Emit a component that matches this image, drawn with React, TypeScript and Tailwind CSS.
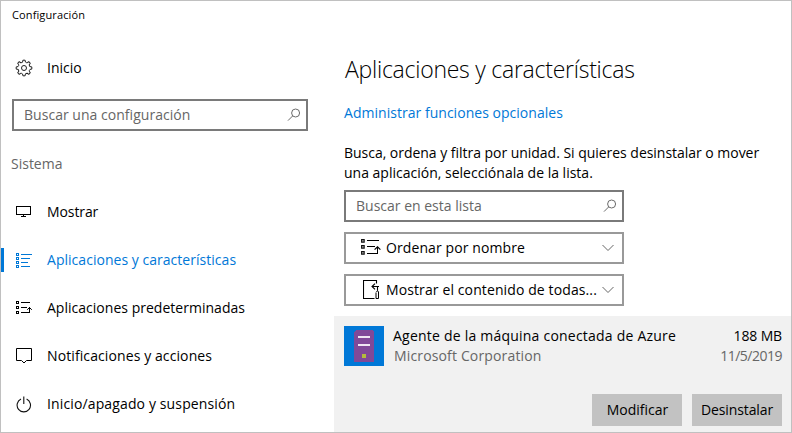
import type { ReactNode } from "react";

function GearIcon() {
  const teeth = [0, 45, 90, 135, 180, 225, 270, 315];
  return (
    <svg width="18" height="18" viewBox="0 0 18 18" fill="none" stroke="#222" strokeWidth="1">
      <circle cx="9" cy="9" r="2.5" />
      {teeth.map((a) => (
        <path
          key={a}
          transform={`rotate(${a} 9 9)`}
          d="M7.6 3 L7.9 1.2 H10.1 L10.4 3 Q11.3 3.9 12.2 3.7"
          strokeLinejoin="round"
        />
      ))}
    </svg>
  );
}

function SearchIcon() {
  return (
    <svg width="14" height="14" viewBox="0 0 14 14" fill="none" stroke="#6b6b6b" strokeWidth="1">
      <circle cx="8.6" cy="5" r="4" />
      <path d="M5.7 7.9 L1 12.6" />
    </svg>
  );
}

function MonitorIcon() {
  return (
    <svg width="16" height="12" viewBox="0 0 16 12" fill="none" stroke="#000" shapeRendering="crispEdges">
      <path d="M0.5 0.5 H14.5 V8.5 H0.5 Z M7.5 9 V10 M5 10.5 H10" />
    </svg>
  );
}

function ListIcon() {
  return (
    <svg width="17" height="15" viewBox="0 0 17 15" fill="none" stroke="#0078d7" shapeRendering="crispEdges">
      <path d="M0.5 0.5h2v2h-2z M0.5 4.5h2v2h-2z M0.5 8.5h2v2h-2z M0.5 12.5h2v2h-2z" />
      <path d="M5 1.5H16 M5 5.5H14 M5 9.5H12 M5 13.5H14" />
    </svg>
  );
}

function DefaultsIcon() {
  return (
    <svg width="17" height="14" viewBox="0 0 17 14" fill="none" stroke="#000">
      <path shapeRendering="crispEdges" d="M0.5 0.5h2v2h-2z M0.5 5.5h2v2h-2z M0.5 10.5h2v2h-2z M5 1.5H14 M5 6.5H11 M5 11.5H14 M13.5 6V11" />
      <path d="M11.2 8.8 L13.5 6.5 L15.8 8.8" />
    </svg>
  );
}

function NotificationIcon() {
  return (
    <svg width="16" height="16" viewBox="0 0 16 16" fill="none" stroke="#000">
      <path d="M0.5 0.5 H15.5 V12.5 H10.5 L8 15 L5.5 12.5 H0.5 Z" />
    </svg>
  );
}

function PowerIcon() {
  return (
    <svg width="16" height="17" viewBox="0 0 16 17" fill="none" stroke="#111" strokeWidth="1.1">
      <path d="M5 3.1 A6.7 6.7 0 1 0 10.6 3.1 M7.8 0.5 V8" />
    </svg>
  );
}

function SortIcon() {
  return (
    <svg width="20" height="18" viewBox="0 0 20 18" fill="none" stroke="#000">
      <path strokeWidth="1.3" stroke="#111" d="M0.7 0.7h2.4v2.4h-2.4z M0.7 6.7h2.4v2.4h-2.4z M0.7 12.7h2.4v2.4h-2.4z" />
      <path shapeRendering="crispEdges" d="M6 1.5H18 M6 7.5H14 M6 14.5H17 M16.5 8V15" />
      <path strokeWidth="1.2" d="M13.6 10.6 L16.5 7.8 L19.4 10.6" />
    </svg>
  );
}

function DriveIcon() {
  return (
    <svg width="18" height="20" viewBox="0 0 18 20" fill="none" stroke="#000">
      <path strokeWidth="1.1" d="M11.5 18.5 H0.5 V0.5 H13.5 V3.5" />
      <path strokeWidth="1.1" d="M9 6.5 H16 M14.5 6.5 V10.5 M12 3.6 L9 6.5 L12 9.4" />
      <path d="M13.5 12 L14.5 10.5 L15.5 12 V18.5 H13 V12.5" />
    </svg>
  );
}

function ChevronIcon() {
  return (
    <svg width="12" height="8" viewBox="0 0 12 8" fill="none" stroke="#666" strokeWidth="1">
      <path d="M0.5 1 L6 6.5 L11.5 1" />
    </svg>
  );
}

function AgentIcon() {
  return (
    <svg className="shrink-0" width="40" height="40" viewBox="0 0 40 40" shapeRendering="crispEdges">
      <rect width="40" height="40" fill="#0078d7" />
      <path d="M10 36 V6 L12 4 H28 L30 6 V36 Z" fill="#804998" />
      <path d="M14 10h12v2h-12z M14 18h12v2h-12z" fill="#efe6f2" />
      <rect x="18" y="28" width="4" height="4" fill="#b4bd3c" />
    </svg>
  );
}

function NavItem({ icon, label, active = false }: { icon: ReactNode; label: ReactNode; active?: boolean }) {
  return (
    <li className={active ? "flex h-12 items-center text-[#0078d7]" : "flex h-12 items-center"}>
      <span className={active ? "h-6 w-[3px] bg-[#0078d7]" : "h-6 w-[3px]"} />
      <span className="flex w-[43px] items-center pl-3">{icon}</span>
      {label}
    </li>
  );
}

function Dropdown({ icon, children }: { icon: ReactNode; children: ReactNode }) {
  return (
    <button className="flex h-8 w-[280px] items-center border-2 border-[#999999] bg-white pr-2">
      <span className="flex w-10 shrink-0 justify-end pr-[5px]">{icon}</span>
      <span className="w-0 flex-1 text-left">{children}</span>
      <ChevronIcon />
    </button>
  );
}

export default function App() {
  return (
    <div className="flex h-[433px] w-[792px] flex-col overflow-hidden border border-[#c0c0c0] bg-white font-['Open_Sans','Noto_Sans',sans-serif] text-[14px] leading-5 whitespace-nowrap text-black">
      <header className="h-[30px] pt-[6px] pl-[11px] text-[11px] leading-4 tracking-[0.12px]">Configuración</header>
      <div className="flex flex-1">
        <aside className="w-[333px]">
          <div className="flex h-[73px] items-center pl-[14px]">
            <span className="w-8"><GearIcon /></span>
            <span>Inicio</span>
          </div>
          <div className="-mt-[5px] ml-[11px] flex h-8 w-[296px] items-center justify-between border-2 border-[#7a7a7a] pr-[5px] pl-[10px] text-[#666]">
            <span className="tracking-[0.03px]">Buscar una configuración</span>
            <SearchIcon />
          </div>
          <h2 className="mt-[23px] pl-[10px] text-[#666]">Sistema</h2>
          <ul className="mt-[14px]">
            <NavItem icon={<MonitorIcon />} label={<span className="tracking-[-0.1px]">Mostrar</span>} />
            <NavItem active icon={<ListIcon />} label={<span className="tracking-[0.03px]">Aplicaciones y características</span>} />
            <NavItem icon={<DefaultsIcon />} label={<span className="tracking-[0.02px]">Aplicaciones predeterminadas</span>} />
            <NavItem icon={<NotificationIcon />} label={<span className="tracking-[0.1px]">Notificaciones y acciones</span>} />
            <NavItem icon={<PowerIcon />} label={<span className="tracking-[0.13px]">Inicio/apagado y suspensión</span>} />
          </ul>
        </aside>
        <main className="flex flex-1 flex-col">
          <div className="pl-[10px]">
            <h1 className="pt-[20px] pl-px text-[23px] leading-9 font-[350] tracking-[-0.25px]">Aplicaciones y características</h1>
            <p className="mt-[16px] text-[#0078d7]"><span className="tracking-[0.03px]">Administrar funciones opcionales</span></p>
            <p className="mt-5">
              <span className="tracking-[-0.03px]">Busca, ordena y filtra por unidad. Si quieres desinstalar o mover</span>
              <br />
              <span>una aplicación, selecciónala de la lista.</span>
            </p>
            <div className="mt-[7px] flex flex-col gap-[10px]">
              <div className="flex h-8 w-[280px] items-center justify-between border-2 border-[#7a7a7a] pr-[5px] pl-[10px] text-[#666]">
                <span>Buscar en esta lista</span>
                <SearchIcon />
              </div>
              <Dropdown icon={<SortIcon />}><span className="tracking-[0.1px]">Ordenar por nombre</span></Dropdown>
              <Dropdown icon={<DriveIcon />}><span className="tracking-[0.11px]">Mostrar el contenido de todas...</span></Dropdown>
            </div>
          </div>
          <section className="mt-[10px] flex-1 bg-[#f1f1f1] pt-[10px] pr-[9px] pl-[10px]">
            <div className="flex">
              <AgentIcon />
              <div className="flex-1 pl-[9px]">
                <p className="tracking-[0.22px]">Agente de la máquina conectada de Azure</p>
                <p className="pl-px tracking-[0.15px] text-[#666]">Microsoft Corporation</p>
              </div>
              <div className="text-right">
                <p className="tracking-[-0.15px]">188 MB</p>
                <p className="tracking-[-0.5px] text-[#666]">11/5/2019</p>
              </div>
            </div>
            <div className="mt-7 flex justify-end gap-[10px]">
              <button className="h-8 w-[90px] bg-[#c2c2c2] pl-px">Modificar</button>
              <button className="h-8 w-[90px] bg-[#c2c2c2] tracking-[-0.1px]">Desinstalar</button>
            </div>
          </section>
        </main>
      </div>
    </div>
  );
}
